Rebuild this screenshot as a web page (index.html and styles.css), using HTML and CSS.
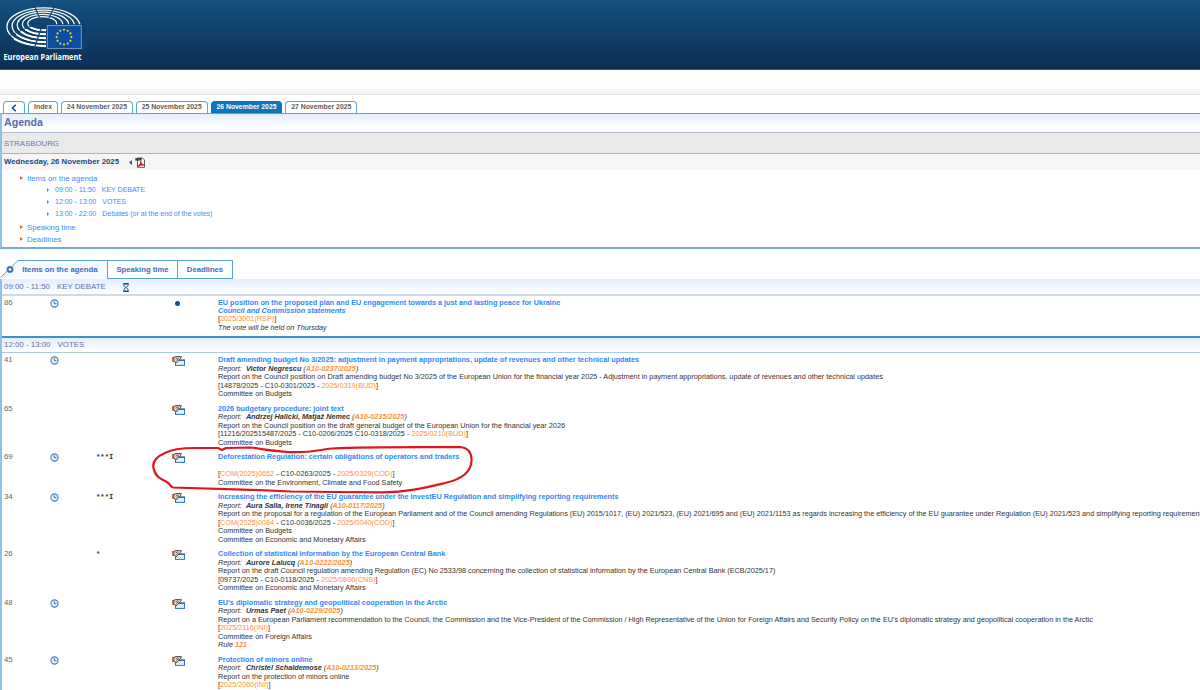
FILE: index.html
```html
<!DOCTYPE html>
<html lang="en">

<head>
    <meta charset="UTF-8">
    <meta name="viewport" content="width=device-width, initial-scale=1.0">
    <title>Agenda - Wednesday, 26 November 2025</title>
    <link rel="stylesheet" href="styles.css">
</head>

<body>
    <!-- Shared icons -->
    <svg class="sprite" width="0" height="0">
        <symbol id="icon-clock" viewBox="0 0 9 9">
            <circle cx="4.5" cy="4.5" r="3.6" fill="#e6f1fb" stroke="#3f7fc1" stroke-width="1.1" />
            <path d="M4.3 2.3V4.7H6.5" fill="none" stroke="#2a66a8" stroke-width="0.9" />
        </symbol>
        <symbol id="icon-vote" viewBox="0 0 13 10">
            <rect x="3.5" y="4" width="9" height="5.4" fill="#e3effa" stroke="#2f76b8" stroke-width="1" />
            <path d="M3 4.3H13" stroke="#2467a8" stroke-width="1.2" />
            <path d="M1.8 1.3L4 0.6L9.4 0.7L8.6 2.4L6.4 4.8L5 6.4L3.4 6.2L1.8 5Z" fill="#f0dfd3" stroke="#3a2e2c" stroke-width="0.9" />
            <path d="M3.6 3L6.3 1.8M4.2 4.6L7 2.6" stroke="#3a2e2c" stroke-width="0.7" />
            <rect x="0.2" y="0.9" width="1.7" height="5" fill="#b5531f" />
        </symbol>
    </svg>

    <div class="header">
        <svg class="logo" width="86" height="66" viewBox="0 0 86 66">
            <g fill="none" stroke="#ffffff">
                <ellipse cx="43.5" cy="26.8" rx="36.6" ry="18.9" stroke-width="1.3" />
                <ellipse cx="43.3" cy="26" rx="31.2" ry="15.9" stroke-width="1.3" />
                <ellipse cx="43" cy="25" rx="25.8" ry="12.9" stroke-width="1.2" />
                <ellipse cx="42.6" cy="24.2" rx="20.2" ry="9.9" stroke-width="1.2" />
                <ellipse cx="42.2" cy="23.4" rx="14.4" ry="6.7" stroke-width="1.2" />
            </g>
            <g fill="none" stroke="#ffffff" stroke-width="2">
                <path d="M14 39C22 43.5 31 46.2 46 46.2" />
                <path d="M17 35C24 39.5 32 42.2 46 42.2" />
                <path d="M21 31.5C26 35.8 34 38.2 46 38.2" />
                <path d="M26 29.5C30 32.6 36 34.3 46 34.3" />
                <path d="M31 27.5C34 29.4 39 30.2 46 30.2" />
            </g>
            <g stroke="#12466f" stroke-width="1.2">
                <path d="M34.5 6L39.5 18" />
                <path d="M54.5 6L49 18" />
                <path d="M41.3 28L34.3 48" />
                <path d="M31 26L9 36" stroke-width="0.8" />
            </g>
            <path d="M46 24.3H86V50H46Z" fill="#0f3f69" />
            <rect x="47.3" y="25.6" width="34" height="22.8" fill="#0c4da2" stroke="#7f9fc8" stroke-width="0.9" />
            <g fill="#f3e50b">
                <circle cx="64" cy="29.7" r="1.05" />
                <circle cx="67.7" cy="30.7" r="1.05" />
                <circle cx="70.4" cy="33.4" r="1.05" />
                <circle cx="71.4" cy="37.1" r="1.05" />
                <circle cx="70.4" cy="40.8" r="1.05" />
                <circle cx="67.7" cy="43.5" r="1.05" />
                <circle cx="64" cy="44.5" r="1.05" />
                <circle cx="60.3" cy="43.5" r="1.05" />
                <circle cx="57.6" cy="40.8" r="1.05" />
                <circle cx="56.6" cy="37.1" r="1.05" />
                <circle cx="57.6" cy="33.4" r="1.05" />
                <circle cx="60.3" cy="30.7" r="1.05" />
            </g>
            <text class="logo-text" x="3.5" y="60" textLength="78" lengthAdjust="spacingAndGlyphs">European Parliament</text>
        </svg>
    </div>
    <div class="subheader"></div>

    <div class="day-tabs">
        <a class="day-tab back">
            <svg width="6" height="8" viewBox="0 0 6 8"><path d="M4.8 0.8L1.5 4L4.8 7.2" fill="none" stroke="#12478a" stroke-width="1.5" /></svg>
        </a>
        <a class="day-tab index">Index</a>
        <a class="day-tab">24 November 2025</a>
        <a class="day-tab">25 November 2025</a>
        <a class="day-tab active">26 November 2025</a>
        <a class="day-tab">27 November 2025</a>
    </div>

    <div class="agenda">
        <h1>Agenda</h1>
        <div class="place">STRASBOURG</div>
        <div class="date">
            <span>Wednesday, 26 November 2025</span>
            <svg class="date-arrow" width="3" height="5" viewBox="0 0 3 5"><path d="M3 0V5L0 2.5Z" fill="#1a5fa8" /></svg>
            <svg width="11" height="11" viewBox="0 0 11 11">
                <path d="M2.5 1H7.5L9.5 3V10.3H2.5Z" fill="#ffffff" stroke="#4a4a4a" stroke-width="0.9" />
                <rect x="0.3" y="1" width="6.5" height="2.6" fill="#4b4340" />
                <path d="M3 9.5C5.5 8 6 5.500 5.500 4.300C5.500 6.500 7.500 8.300 9.300 8C7 7.600 4.500 8.200 3 9.500Z" fill="none" stroke="#d3231b" stroke-width="1.400" />
            </svg>
        </div>
        <ul class="contents">
            <li>Items on the agenda
                <ul>
                    <li><span>09:00 - 11:50</span>KEY DEBATE</li>
                    <li><span>12:00 - 13:00</span>VOTES</li>
                    <li><span>13:00 - 22:00</span>Debates (or at the end of the votes)</li>
                </ul>
            </li>
            <li>Speaking time</li>
            <li>Deadlines</li>
        </ul>
    </div>

    <div class="item-tabs">
        <svg class="tab-start" width="22" height="18" viewBox="0 0 22 18">
            <path d="M1 18L18.5 0.5H22V18Z" fill="#f6faff" />
            <path d="M0.5 17.5L18 0.5H22" fill="none" stroke="#56a3d3" stroke-width="1" />
            <circle cx="10" cy="9.5" r="3.7" fill="#8fb2dd" />
            <circle cx="10" cy="9.5" r="2.2" fill="#ffffff" stroke="#3465a8" stroke-width="1.5" />
        </svg>
        <a class="item-tab current">Items on the agenda</a>
        <a class="item-tab speaking">Speaking time</a>
        <a class="item-tab deadlines">Deadlines</a>
    </div>

    <div class="items">
        <div class="section first">
            <span class="hours">09:00 - 11:50</span>KEY DEBATE
            <svg class="hourglass" width="6" height="9" viewBox="0 0 6 9">
                <path d="M0.2 0.7H5.8M0.2 8.3H5.8" stroke="#17487f" stroke-width="1.2" />
                <path d="M1 1V2.7L2.6 4.5L1 6.3V8H5V6.3L3.4 4.5L5 2.7V1Z" fill="#dbe9f7" stroke="#17487f" stroke-width="0.9" />
            </svg>
        </div>
        <div class="item debate">
            <div>86</div>
            <div><svg width="9" height="9"><use href="#icon-clock" /></svg></div>
            <div></div>
            <div class="type"><span class="dot"></span></div>
            <div class="text">
                <p class="title">EU position on the proposed plan and EU engagement towards a just and lasting peace for Ukraine</p>
                <p class="title"><i>Council and Commission statements</i></p>
                <p>[<a>2025/3001(RSP)</a>]</p>
                <p><i>The vote will be held on Thursday</i></p>
            </div>
        </div>

        <div class="section votes"><span class="hours">12:00 - 13:00</span>VOTES</div>
        <div class="item">
            <div>41</div>
            <div><svg width="9" height="9"><use href="#icon-clock" /></svg></div>
            <div></div>
            <div><svg width="13" height="10"><use href="#icon-vote" /></svg></div>
            <div class="text">
                <p class="title">Draft amending budget No 3/2025: adjustment in payment appropriations, update of revenues and other technical updates</p>
                <p class="report">Report:&nbsp; <b>Victor Negrescu</b> (<a>A10-0237/2025</a>)</p>
                <p>Report on the Council position on Draft amending budget No 3/2025 of the European Union for the financial year 2025 - Adjustment in payment appropriations, update of revenues and other technical updates</p>
                <p>[14878/2025 - C10-0301/2025 - <a>2025/0319(BUD)</a>]</p>
                <p>Committee on Budgets</p>
            </div>
        </div>
        <div class="item">
            <div>65</div>
            <div></div>
            <div></div>
            <div><svg width="13" height="10"><use href="#icon-vote" /></svg></div>
            <div class="text">
                <p class="title">2026 budgetary procedure: joint text</p>
                <p class="report">Report:&nbsp; <b>Andrzej Halicki, Matjaž Nemec</b> (<a>A10-0235/2025</a>)</p>
                <p>Report on the Council position on the draft general budget of the European Union for the financial year 2026</p>
                <p>[11216/202515487/2025 - C10-0206/2025 C10-0318/2025 - <a>2025/0210(BUD)</a>]</p>
                <p>Committee on Budgets</p>
            </div>
        </div>
        <div class="item">
            <div>69</div>
            <div><svg width="9" height="9"><use href="#icon-clock" /></svg></div>
            <div class="procedure">***I</div>
            <div><svg width="13" height="10"><use href="#icon-vote" /></svg></div>
            <div class="text">
                <p class="title">Deforestation Regulation: certain obligations of operators and traders</p>
                <p>&nbsp;</p>
                <p>[<a>COM(2025)0652</a> - C10-0263/2025 - <a>2025/0329(COD)</a>]</p>
                <p>Committee on the Environment, Climate and Food Safety</p>
            </div>
            <!-- Hand drawn mark round the item -->
            <svg class="mark" width="324" height="52" viewBox="0 0 324 52">
                <path d="M22 44.5L100 46.8L140 48.5L185 49L232 49.3C255 49.5 275 44.5 294 40C312 36 320 29 320.5 18C321 9 316 4.5 309 4L267 4.2C235 4.2 205 4.5 181 5.5C168 7 160 9.2 145 9.2C128 9.2 118 7 100 4.5L75 5L71 7L67 5L44 5C30 5 20 6.5 14 10C7 13 1 18 2.5 25C4 33 9 36 15 38.5C20 41 19 44 22 44.5" fill="none" stroke="#e0161b" stroke-width="2.2" stroke-linecap="round" stroke-linejoin="round" />
            </svg>
        </div>
        <div class="item">
            <div>34</div>
            <div><svg width="9" height="9"><use href="#icon-clock" /></svg></div>
            <div class="procedure">***I</div>
            <div><svg width="13" height="10"><use href="#icon-vote" /></svg></div>
            <div class="text">
                <p class="title">Increasing the efficiency of the EU guarantee under the InvestEU Regulation and simplifying reporting requirements</p>
                <p class="report">Report:&nbsp; <b>Aura Salla, Irene Tinagli</b> (<a>A10-0117/2025</a>)</p>
                <p>Report on the proposal for a regulation of the European Parliament and of the Council amending Regulations (EU) 2015/1017, (EU) 2021/523, (EU) 2021/695 and (EU) 2021/1153 as regards increasing the efficiency of the EU guarantee under Regulation (EU) 2021/523 and simplifying reporting requirements</p>
                <p>[<a>COM(2025)0084</a> - C10-0036/2025 - <a>2025/0040(COD)</a>]</p>
                <p>Committee on Budgets</p>
                <p>Committee on Economic and Monetary Affairs</p>
            </div>
        </div>
        <div class="item">
            <div>26</div>
            <div></div>
            <div class="procedure">*</div>
            <div><svg width="13" height="10"><use href="#icon-vote" /></svg></div>
            <div class="text">
                <p class="title">Collection of statistical information by the European Central Bank</p>
                <p class="report">Report:&nbsp; <b>Aurore Lalucq</b> (<a>A10-0222/2025</a>)</p>
                <p>Report on the draft Council regulation amending Regulation (EC) No 2533/98 concerning the collection of statistical information by the European Central Bank (ECB/2025/17)</p>
                <p>[09737/2025 - C10-0118/2025 - <a>2025/0806(CNS)</a>]</p>
                <p>Committee on Economic and Monetary Affairs</p>
            </div>
        </div>
        <div class="item">
            <div>48</div>
            <div><svg width="9" height="9"><use href="#icon-clock" /></svg></div>
            <div></div>
            <div><svg width="13" height="10"><use href="#icon-vote" /></svg></div>
            <div class="text">
                <p class="title">EU’s diplomatic strategy and geopolitical cooperation in the Arctic</p>
                <p class="report">Report:&nbsp; <b>Urmas Paet</b> (<a>A10-0229/2025</a>)</p>
                <p>Report on a European Parliament recommendation to the Council, the Commission and the Vice-President of the Commission / High Representative of the Union for Foreign Affairs and Security Policy on the EU’s diplomatic strategy and geopolitical cooperation in the Arctic</p>
                <p>[<a>2025/2116(INI)</a>]</p>
                <p>Committee on Foreign Affairs</p>
                <p><i>Rule <a>121</a></i></p>
            </div>
        </div>
        <div class="item">
            <div>45</div>
            <div><svg width="9" height="9"><use href="#icon-clock" /></svg></div>
            <div></div>
            <div><svg width="13" height="10"><use href="#icon-vote" /></svg></div>
            <div class="text">
                <p class="title">Protection of minors online</p>
                <p class="report">Report:&nbsp; <b>Christel Schaldemose</b> (<a>A10-0213/2025</a>)</p>
                <p>Report on the protection of minors online</p>
                <p>[<a>2025/2060(INI)</a>]</p>
            </div>
        </div>
    </div>
</body>

</html>
```
FILE: styles.css
```css
* {
    box-sizing: border-box;
}

body {
    font-family: "Liberation Sans", Arial, sans-serif;
    font-size: 7.28px;
    line-height: 8.46px;
    color: #333333;
    margin: 0;
    height: 690px;
    overflow: hidden;
    background-color: #ffffff;
}

.sprite {
    position: absolute;
}

svg {
    display: block;
    flex-shrink: 0;
    overflow: visible;
}

/* Header */
.header {
    height: 70px;
    background: linear-gradient(#14507f, #0a2f54);
    border-bottom: 1px solid #3c6288;
}

.logo-text {
    font-family: "Open Sans", sans-serif;
    font-size: 9.6px;
    font-weight: bold;
    fill: #ffffff;
}

.subheader {
    height: 25px;
    background: linear-gradient(#ffffff 70%, #f2f2f2);
    border-bottom: 1px solid #e4e4e4;
}

/* Day tabs */
.day-tabs {
    display: flex;
    gap: 3px;
    height: 18px;
    padding: 6px 0 0 3px;
}

.day-tab {
    display: flex;
    justify-content: center;
    align-items: center;
    width: 71.8px;
    height: 12px;
    border: 1px solid #5aa7d6;
    border-bottom: none;
    border-radius: 4px 4px 0 0;
    font-size: 6.85px;
    font-weight: bold;
    color: #5c5c54;
}

.day-tab.back {
    width: 22px;
    padding-top: 1px;
}

.day-tab.index {
    width: 30px;
}

.day-tab.active {
    background-color: #0a75bb;
    border-color: #0a75bb;
    color: #ffffff;
}

/* Agenda */
.agenda {
    height: 136px;
    border: 1px solid #5aa7d6;
    border-left: 2px solid #8cc3e6;
    border-right: none;
    border-bottom: 2px solid #69b0da;
}

h1 {
    margin: 0;
    height: 19px;
    padding-left: 2px;
    font-size: 10.64px;
    line-height: 16px;
    color: #586cb0;
    background: linear-gradient(#e4eefd, #ffffff 80%);
    border-bottom: 1px solid #b5bcd8;
}

.place {
    height: 21px;
    padding-left: 2px;
    font-size: 7.85px;
    line-height: 21px;
    color: #6577b4;
    background-color: #eaeaea;
    border-bottom: 1px solid #8fbedd;
}

.date {
    display: flex;
    align-items: center;
    height: 16px;
    padding-left: 2px;
    font-size: 7.77px;
    font-weight: bold;
    color: #134a88;
    background-color: #f5f5f5;
}

.date-arrow {
    margin: 0 3px 0 10px;
}

.contents,
.contents ul {
    list-style: none;
    margin: 0;
    padding: 0;
}

.contents {
    padding: 3px 0 0 25px;
    font-size: 7.73px;
    line-height: 12.2px;
    color: #3c8cf7;
}

.contents li::before {
    content: "";
    float: left;
    margin: 3px 0 0 -7.5px;
    border: 2.5px solid transparent;
    border-left: 3px solid #ef6022;
    border-right: none;
}

.contents ul {
    margin-top: -1px;
    padding: 0 0 2px 28px;
    font-size: 7px;
    line-height: 12px;
}

.contents ul li::before {
    margin: 4px 0 0 -8.5px;
    border-width: 2px;
    border-left-color: #3c8cf7;
}

.contents span {
    margin-right: 6px;
}

/* Item tabs */
.item-tabs {
    display: flex;
    height: 30px;
    padding-top: 11px;
}

.item-tab {
    height: 18.5px;
    border-top: 1px solid #56a3d3;
    border-right: 1px solid #56a3d3;
    border-bottom: 1px solid #56a3d3;
    font-size: 7.7px;
    font-weight: bold;
    line-height: 18px;
    text-align: center;
    color: #3d6cc0;
}

.item-tab.current {
    width: 86px;
    padding-right: 9px;
    font-size: 7.8px;
    background-color: #f6faff;
    border-bottom: none;
}

.item-tab.speaking {
    width: 70px;
}

.item-tab.deadlines {
    width: 55px;
}

/* Items */
.items {
    border-left: 2px solid #8cc3e6;
}

.section {
    display: flex;
    align-items: center;
    height: 17px;
    padding-left: 2px;
    font-size: 7.9px;
    color: #5d6fae;
    background: linear-gradient(#e4eefd, #ffffff);
    border-bottom: 1px solid #a9cbe5;
}

.section.first {
    padding-top: 1px;
    border-bottom: 2px solid #ccd9ee;
}

.section.votes {
    height: 17.5px;
    margin-bottom: 3px;
    border-top: 2px solid #3c93cd;
}

.hours {
    margin-right: 7px;
}

.hourglass {
    margin-left: 17px;
}

.item {
    display: grid;
    grid-template-columns: 46px 46px 76px 46px max-content;
    position: relative;
    padding: 0 0 6.3px 2px;
}

.item.debate {
    height: 39.7px;
    padding-top: 2.5px;
}

.item > div:first-child {
    font-size: 7.8px;
    color: #666666;
}

.text {
    white-space: nowrap;
}

p {
    margin: 0;
}

.title {
    font-weight: bold;
    color: #2f87f8;
}

.report {
    font-style: italic;
}

.text a {
    color: #ff9036;
}

.report a,
i a {
    font-weight: bold;
}

.procedure {
    font-family: "Liberation Mono", monospace;
    font-size: 7.2px;
    font-weight: bold;
}

.dot {
    display: block;
    width: 5px;
    height: 5px;
    margin: 2px 0 0 3px;
    border-radius: 50%;
    background-color: #0f4c9c;
}

.mark {
    position: absolute;
    left: 149px;
    top: -10px;
}
```
